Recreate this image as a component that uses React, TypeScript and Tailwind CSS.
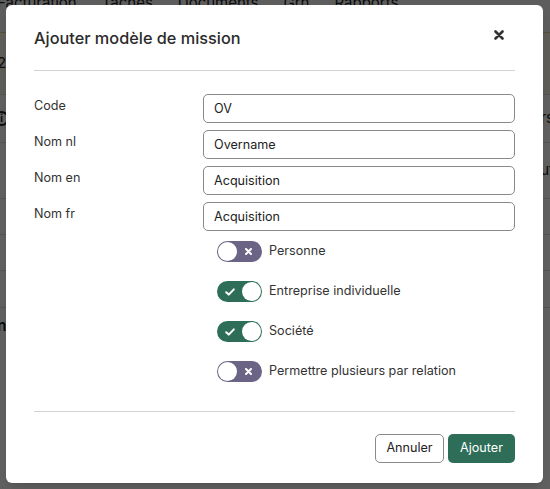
import { useState } from 'react';

const FIELDS = [
  { label: 'Code', value: 'OV' },
  { label: 'Nom nl', value: 'Overname' },
  { label: 'Nom en', value: 'Acquisition' },
  { label: 'Nom fr', value: 'Acquisition' },
];

const TOGGLES = [
  { label: 'Personne', on: false },
  { label: 'Entreprise individuelle', on: true },
  { label: 'Société', on: true },
  { label: 'Permettre plusieurs par relation', on: false },
];

const NAV = ['Facturation', 'Tâches', 'Documents', 'Grh', 'Rapports'];

function CloseIcon() {
  return (
    <svg width="10" height="10" viewBox="0 0 10 10" className="text-[#333]">
      <path d="M1.5 1.5 L8.5 8.5 M8.5 1.5 L1.5 8.5" stroke="currentColor" strokeWidth="2.6" strokeLinecap="round" />
    </svg>
  );
}

function Toggle({ checked, onChange }: { checked: boolean; onChange: () => void }) {
  return (
    <button
      type="button"
      onClick={onChange}
      className={`relative flex h-[21px] w-[45px] shrink-0 items-center rounded-full ${checked ? 'bg-[#2e6e58]' : 'bg-[#6b6485]'}`}
    >
      {checked ? (
        <>
          <svg width="10" height="8" viewBox="0 0 10 8" className="absolute left-[8px]">
            <path d="M1.2 4.2 L3.8 6.6 L8.8 1.4" fill="none" stroke="white" strokeWidth="2" strokeLinecap="round" strokeLinejoin="round" />
          </svg>
          <span className="absolute right-[1px] h-[19px] w-[19px] rounded-full bg-white" />
        </>
      ) : (
        <>
          <span className="absolute left-[1px] h-[19px] w-[19px] rounded-full bg-white" />
          <svg width="7" height="7" viewBox="0 0 7 7" className="absolute right-[10px]">
            <path d="M1 1 L6 6 M6 1 L1 6" stroke="white" strokeWidth="2" strokeLinecap="round" />
          </svg>
        </>
      )}
    </button>
  );
}

// dimmed page behind the dialog
function Backdrop() {
  return (
    <div className="absolute inset-0 bg-white text-[15px] text-[#222]">
      <div className="flex h-[33px] items-start gap-[27px] border-b border-[#d9cf9a] bg-[#f4f4f4] pt-[0px]">
        {NAV.map((n) => (
          <span key={n} className="-ml-[2px] leading-[6px] first:-ml-[3px]">
            {n}
          </span>
        ))}
      </div>
      <div className="flex h-[62px] items-center border-b border-[#ddd] bg-[#fbf8ea] text-[15px]">
        <span className="-ml-[3px]">2024</span>
      </div>
      <div className="flex h-[48px] items-center justify-between border-b border-[#ddd]">
        <span className="-ml-[6px] flex h-[15px] w-[15px] items-center justify-center rounded-full border-2 border-[#222] text-[10px] font-bold">i</span>
        <span className="-mr-[4px]">Valeurs</span>
      </div>
      <div className="flex h-[56px] items-center justify-end border-b border-[#ddd]">
        <span className="-mr-[4px]">Statut</span>
      </div>
      <div className="h-[36px] border-b border-[#ddd]" />
      <div className="flex h-[36px] items-center border-b border-[#ddd] font-semibold">
        <span className="-ml-[68px]">Société</span>
      </div>
      <div className="flex h-[37px] items-center border-b border-[#ddd] font-semibold">
        <span className="-ml-[60px]">Nomme</span>
      </div>
      <div className="flex h-[37px] items-center font-semibold">
        <span className="-ml-[50px]">Mission</span>
      </div>
    </div>
  );
}

export default function App() {
  const [toggles, setToggles] = useState(TOGGLES.map((t) => t.on));

  return (
    <div className="relative h-[489px] w-[550px] overflow-hidden font-['Inter',sans-serif]">
      <Backdrop />
      <div className="absolute inset-0 bg-black/[0.62] pl-[6px] pt-[5px]">
        <div className="flex h-[478px] w-[537px] flex-col rounded-[6px] bg-white px-[28px] text-[#333] shadow-lg">
          <div className="flex items-center justify-between border-b border-[#d2d2d2] pb-[20px] pt-[21px]">
            <h2 className="text-[16.3px] font-medium leading-[24px] text-[#2b2b2b]">Ajouter modèle de mission</h2>
            <span className="mr-[11px] -mt-[6px]">
              <CloseIcon />
            </span>
          </div>

          <div className="flex flex-col gap-[7px] pt-[23px]">
            {FIELDS.map((f) => (
              <div key={f.label} className="grid grid-cols-[169px_1fr]">
                <label className="pt-[3px] text-[12.6px] leading-[18px]">{f.label}</label>
                <input
                  defaultValue={f.value}
                  className="h-[29px] rounded-[5px] border border-[#8a8a8a] px-[10px] text-[12.6px] text-[#222] outline-none"
                />
              </div>
            ))}
          </div>

          <div className="flex flex-col gap-[19px] pl-[183px] pt-[10px]">
            {TOGGLES.map((t, i) => (
              <div key={t.label} className="flex items-center gap-[7px]">
                <Toggle
                  checked={toggles[i]}
                  onChange={() => setToggles((s) => s.map((v, j) => (j === i ? !v : v)))}
                />
                <span className="-mt-[1px] text-[12.6px] leading-[18px]">{t.label}</span>
              </div>
            ))}
          </div>

          <div className="mt-[29px] flex justify-end gap-[4px] border-t border-[#d2d2d2] pt-[22px]">
            <button className="h-[29px] w-[69px] rounded-[5px] border border-[#8a8a8a] text-[12.6px] text-[#222]">
              Annuler
            </button>
            <button className="h-[29px] w-[67px] rounded-[5px] bg-[#2e6e58] text-[12.6px] text-white">
              Ajouter
            </button>
          </div>
        </div>
      </div>
    </div>
  );
}
